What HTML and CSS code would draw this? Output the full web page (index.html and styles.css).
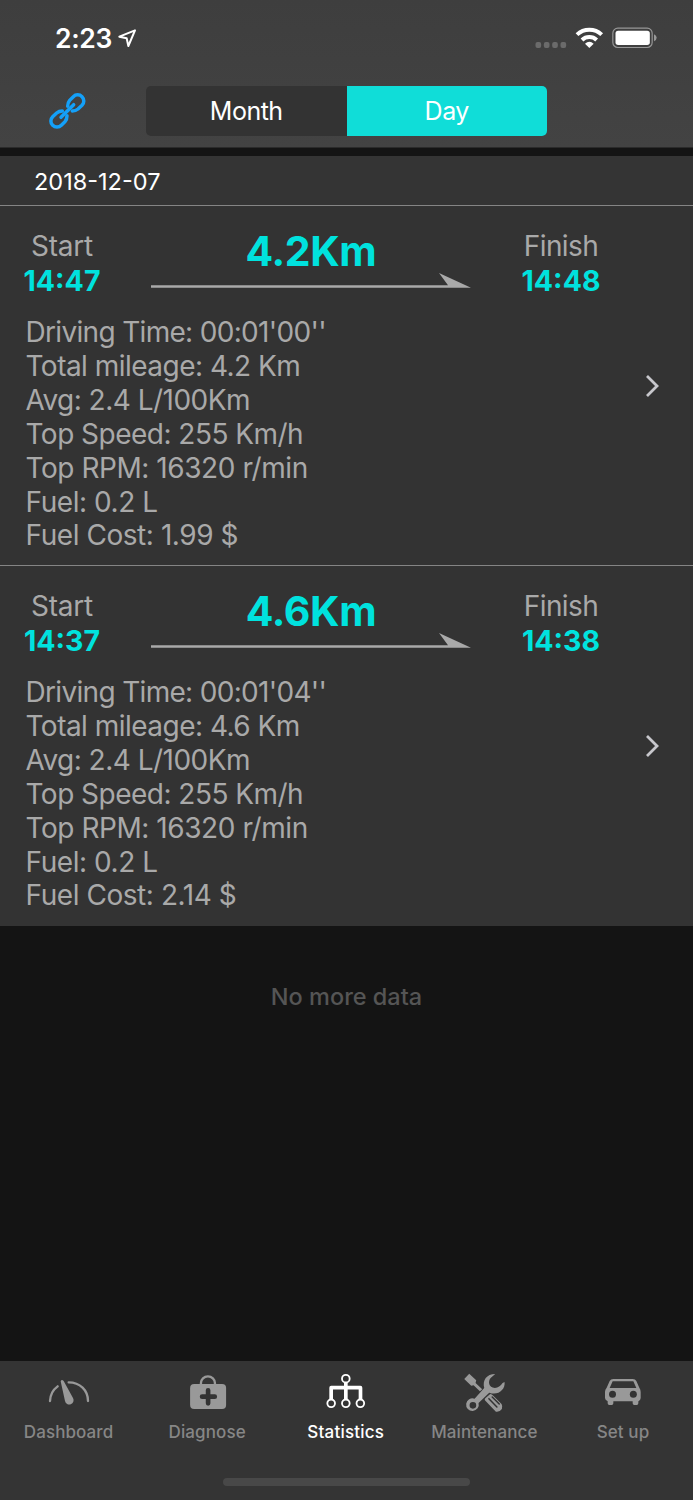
FILE: index.html
```html
<!DOCTYPE html>
<html lang="en">
<head>
<meta charset="utf-8">
<title>Statistics</title>
<link rel="stylesheet" href="styles.css">
</head>
<body>
<div class="app">
  <header class="header">
    <div class="status">
      <span class="clock">2:23</span>
      <svg class="location" viewBox="351 81 63 66"><path d="M405 91 L358 110 L380 115 L385 138 Z"/></svg>
      <svg class="indicators" viewBox="564 78 372 72">
        <g fill="#6b6b6b"><rect x="568.500" y="126" width="17" height="18" rx="6"/><rect x="593.500" y="126" width="17" height="18" rx="6"/><rect x="618.500" y="126" width="17" height="18" rx="6"/><rect x="643.500" y="126" width="17" height="18" rx="6"/></g>
        <g fill="none" stroke="#fff" stroke-width="12"><path d="M693 104 A54 54 0 0 1 767 104"/><path d="M708 120 A32 32 0 0 1 752 120"/></g>
        <path d="M717 131 Q730 120 743 131 L730 144 Z" fill="#fff"/>
        <rect x="800.500" y="84.500" width="118" height="58" rx="15" fill="none" stroke="#989898" stroke-width="3.500"/>
        <rect x="808.500" y="92.500" width="103" height="42.500" rx="8" fill="#fff"/>
        <path d="M924 103 Q932 106 932 113.500 Q932 121 924 124 Z" fill="#989898"/>
      </svg>
    </div>
    <div class="nav">
      <svg class="link" viewBox="144 273 117 120"><path d="M203 319 Q203 308 209 301 L220 290 A18 18 0 0 1 246 316 L234 327 Q227 333 217 333"/><path d="M201 347 Q201 358 195 365 L184 376 A18 18 0 0 1 158 350 L170 339 Q177 333 187 333"/><path d="M183 352 L221 314"/></svg>
      <div class="segments"><div class="segment">Month</div><div class="segment active day">Day</div></div>
    </div>
  </header>
  <main class="list">
    <h1 class="date">2018-12-07</h1>
    <section class="trip">
      <div class="route">
        <div class="stop"><div class="label">Start</div><div class="time">14:47</div></div>
        <div class="leg"><div class="distance">4.2Km</div><svg class="arrow" viewBox="0 0 320 16"><path d="M0 12.300 H297 L288 0 L320 14.700 H0 Z"/></svg></div>
        <div class="stop finish"><div class="label">Finish</div><div class="time">14:48</div></div>
      </div>
      <div class="body">
        <div class="details"><p class="duration">Driving Time: 00:01'00''</p><p>Total mileage: 4.2 Km</p><p>Avg: 2.4 L/100Km</p><p>Top Speed: 255 Km/h</p><p class="loose">Top RPM: 16320 r/min</p><p class="loose">Fuel: 0.2 L</p><p class="loose">Fuel Cost: 1.99 $</p></div>
        <svg class="chevron" viewBox="0 0 14 24"><path d="M2 2 L12 12 L2 22"/></svg>
      </div>
    </section>
    <section class="trip">
      <div class="route">
        <div class="stop"><div class="label">Start</div><div class="time">14:37</div></div>
        <div class="leg"><div class="distance">4.6Km</div><svg class="arrow" viewBox="0 0 320 16"><path d="M0 12.300 H297 L288 0 L320 14.700 H0 Z"/></svg></div>
        <div class="stop finish"><div class="label">Finish</div><div class="time">14:38</div></div>
      </div>
      <div class="body">
        <div class="details"><p class="duration">Driving Time: 00:01'04''</p><p>Total mileage: 4.6 Km</p><p>Avg: 2.4 L/100Km</p><p>Top Speed: 255 Km/h</p><p class="loose">Top RPM: 16320 r/min</p><p class="loose">Fuel: 0.2 L</p><p class="loose">Fuel Cost: 2.14 $</p></div>
        <svg class="chevron" viewBox="0 0 14 24"><path d="M2 2 L12 12 L2 22"/></svg>
      </div>
    </section>
    <p class="empty">No more data</p>
  </main>
  <footer class="footer">
    <nav class="tabs">
      <div class="tab">
        <svg class="icon" viewBox="142 60 132 132"><g fill="none" stroke="#999" stroke-width="7" stroke-linecap="round"><path d="M151 153 Q152 125 174 109"/><path d="M207 97 C241 97 265 121 265 153"/></g><path d="M183 94 Q186 87 192 93 L220 144 A13 13 0 1 1 196 153 Z" fill="#999"/></svg>
        <span>Dashboard</span>
      </div>
      <div class="tab">
        <svg class="icon" viewBox="557.700 60 132 132"><path d="M602.500 103 V99 A21 20 0 0 1 644.500 99 V103" fill="none" stroke="#999" stroke-width="7"/><rect x="570" y="102" width="108" height="75" rx="12" fill="#999"/><path d="M624 121 V160 M606 140 H644" stroke="#333" stroke-width="14" stroke-linecap="round"/></svg>
        <span>Diagnose</span>
      </div>
      <div class="tab current">
        <svg class="icon" viewBox="282.500 60 132 132"><path d="M348 98 V148 M304 148 V113 H392 V148" fill="none" stroke="#fff" stroke-width="11" stroke-linejoin="round"/><g fill="#333" stroke="#fff" stroke-width="5.500"><circle cx="348" cy="86" r="11.500"/><circle cx="304" cy="160" r="11.500"/><circle cx="348" cy="160" r="11.500"/><circle cx="391.500" cy="160" r="11.500"/></g></svg>
        <span>Statistics</span>
      </div>
      <div class="tab">
        <svg class="icon" viewBox="30.300 60 132 132"><g fill="#999"><path d="M34 87 L49 71 L70 91 L68 99 L88 118 L81 124 L62 106 L55 107 Z"/><path d="M127 72 C101 72 88 91 94 114 L65 146 A19 19 0 1 0 77 159 L109 128 C135 138 158 119 155 96 L149 99 Q140 113 126 114 C107 112 104 93 114 83 Z M60 156 A10 10 0 1 1 60 176 A10 10 0 1 1 60 156 Z" fill-rule="evenodd"/><path d="M112 132 Q117 132 121 137 L146 162 Q150 169 147 177 Q140 187 129 185 L96 151 Q94 147 98 144 Z"/></g><path d="M108 146 L132 171 M118 141 L139 162" stroke="#333" stroke-width="4.500" stroke-linecap="round"/></svg>
        <span>Maintenance</span>
      </div>
      <div class="tab">
        <svg class="icon" viewBox="446 60 132 132"><path d="M480 87 H538 Q546 87 549 93 L558 113 Q562 118 562 126 V144 Q562 149 557 153 L555 154 V160 Q555 165 550 165 H543 Q538 165 538 160 V154 H480 V160 Q480 165 475 165 H468 Q463 165 463 160 V154 Q455 150 455 144 V126 Q455 118 460 113 L469 93 Q472 87 480 87 Z M478 94 L469 114 H549 L540 94 Z" fill="#999" fill-rule="evenodd"/><circle cx="477.500" cy="133" r="10.500" fill="#333"/><circle cx="540" cy="133" r="10.500" fill="#333"/></svg>
        <span>Set up</span>
      </div>
    </nav>
    <div class="home"></div>
  </footer>
</div>
</body>
</html>
```
FILE: styles.css
```css
* { box-sizing: border-box; }
body { margin: 0; background: #141414; font-family: Inter, "Liberation Sans", sans-serif; }
svg { display: block; flex: none; }
p, h1 { margin: 0; font-weight: 400; }
.app { width: 693px; height: 1500px; display: flex; flex-direction: column; overflow: hidden; }

.header { height: 148px; background: linear-gradient(#3e3e3e, #434343); border-bottom: 1px solid #2b2b2b; flex: none; }
.status { height: 76px; padding: 0 35px 0 55px; display: flex; align-items: center; color: #fff; }
.clock { width: 62px; font-size: 26.500px; font-weight: 600; line-height: 40px; letter-spacing: -0.3px; }
.location { width: 21px; height: 22px; fill: none; stroke: #fff; stroke-width: 6; stroke-linejoin: round; }
.indicators { width: 124px; height: 24px; margin-left: auto; }
.nav { padding: 9.500px 0 0 48px; display: flex; align-items: center; }
.link { width: 39px; height: 40px; fill: none; stroke: #14a0f8; stroke-width: 10.500; stroke-linecap: round; }
.segments { width: 401px; height: 50px; margin-left: 59px; display: flex; border-radius: 5px; overflow: hidden; background: #333; color: #fff; font-size: 25px; line-height: 51px; letter-spacing: -0.5px; text-align: center; }
.segment { flex: 1; }
.active { background: #10ddd8; }

.list { flex: 1; padding-top: 8px; }
.date { height: 49px; padding-left: 34px; background: #343434; color: #fff; font-size: 23.500px; line-height: 51px; }
.trip { height: 360px; background: #333; border-top: 1px solid #858585; color: #a9a9a9; padding-top: 23px; }
.trip:last-of-type { height: 360.500px; }
.route { height: 87px; display: flex; }
.stop { width: 124px; text-align: center; }
.finish { margin-left: 28px; }
.label { font-size: 28px; line-height: 34px; letter-spacing: -0.2px; }
.finish .label { letter-spacing: -0.6px; }
.time { color: #00e2de; font-size: 28.500px; font-weight: 700; line-height: 36px; }
.leg { width: 320px; margin-left: 27px; text-align: center; }
.distance { color: #00e2de; font-size: 41px; font-weight: 700; line-height: 45px; letter-spacing: -0.4px; }
.arrow { width: 320px; height: 16px; margin-top: -1px; fill: #a9a9a9; }
.body { display: flex; justify-content: space-between; padding: 0 34px 0 25.500px; }
.details { font-size: 28px; line-height: 33.900px; letter-spacing: -0.52px; white-space: nowrap; }
.duration { letter-spacing: -0.68px; }
.loose { letter-spacing: -0.44px; }
.chevron { width: 14px; height: 24px; margin-top: 58px; fill: none; stroke: #c7c7cc; stroke-width: 2.800; }
.empty { margin-top: 55px; text-align: center; color: #555; font-size: 23.500px; font-weight: 500; line-height: 32px; }

.footer { height: 139px; background: #343434; flex: none; padding-top: 9px; }
.tabs { display: grid; grid-template-columns: repeat(5, 1fr); }
.tab { display: flex; flex-direction: column; align-items: center; color: #868686; font-size: 17px; font-weight: 500; line-height: 24px; letter-spacing: 0.1px; }
.tab span { margin-right: 1.500px; }
.icon { width: 44px; height: 44px; margin-bottom: 6px; }
.current { color: #fff; letter-spacing: 0.2px; }
.home { width: 247px; height: 8px; margin: 34px auto 0; border-radius: 4px; background: #484848; }
```
